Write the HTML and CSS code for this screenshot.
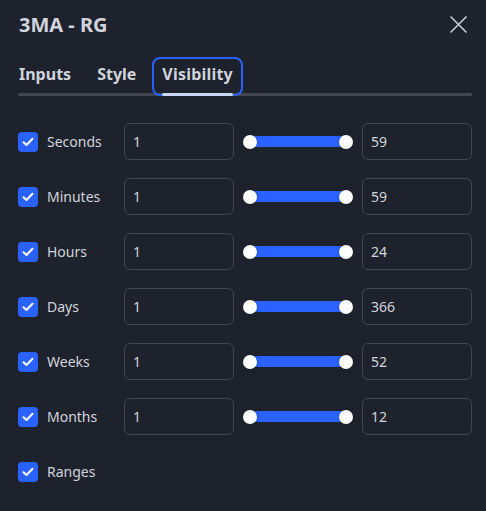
FILE: index.html
```html
<!DOCTYPE html>
<html>
<head>
<meta charset="utf-8">
<link rel="stylesheet" href="styles.css">
</head>
<body>
<div class="dialog">
  <div class="header">
    <div class="title">3MA - RG</div>
    <svg class="close" width="19" height="19" viewBox="0 0 19 19"><path d="M1.5 1.5L17.5 17.5M17.5 1.5L1.5 17.5" stroke="#d1d4dc" stroke-width="1.5" fill="none"/></svg>
  </div>
  <div class="tabs">
    <div class="tab">Inputs</div>
    <div class="tab">Style</div>
    <div class="tab active">Visibility</div>
  </div>
  <div class="rows">
    <div class="row">
      <span class="check"><svg width="12" height="10" viewBox="0 0 12 10"><path d="M1.5 5.2L4.5 8L10.5 1.8" stroke="#fff" stroke-width="2" fill="none" stroke-linecap="round" stroke-linejoin="round"/></svg></span>
      <span class="label">Seconds</span>
      <div class="field">1</div>
      <div class="slider"><span class="track"></span><span class="thumb"></span><span class="thumb"></span></div>
      <div class="field">59</div>
    </div>
    <div class="row">
      <span class="check"><svg width="12" height="10" viewBox="0 0 12 10"><path d="M1.5 5.2L4.5 8L10.5 1.8" stroke="#fff" stroke-width="2" fill="none" stroke-linecap="round" stroke-linejoin="round"/></svg></span>
      <span class="label">Minutes</span>
      <div class="field">1</div>
      <div class="slider"><span class="track"></span><span class="thumb"></span><span class="thumb"></span></div>
      <div class="field">59</div>
    </div>
    <div class="row">
      <span class="check"><svg width="12" height="10" viewBox="0 0 12 10"><path d="M1.5 5.2L4.5 8L10.5 1.8" stroke="#fff" stroke-width="2" fill="none" stroke-linecap="round" stroke-linejoin="round"/></svg></span>
      <span class="label">Hours</span>
      <div class="field">1</div>
      <div class="slider"><span class="track"></span><span class="thumb"></span><span class="thumb"></span></div>
      <div class="field">24</div>
    </div>
    <div class="row">
      <span class="check"><svg width="12" height="10" viewBox="0 0 12 10"><path d="M1.5 5.2L4.5 8L10.5 1.8" stroke="#fff" stroke-width="2" fill="none" stroke-linecap="round" stroke-linejoin="round"/></svg></span>
      <span class="label">Days</span>
      <div class="field">1</div>
      <div class="slider"><span class="track"></span><span class="thumb"></span><span class="thumb"></span></div>
      <div class="field">366</div>
    </div>
    <div class="row">
      <span class="check"><svg width="12" height="10" viewBox="0 0 12 10"><path d="M1.5 5.2L4.5 8L10.5 1.8" stroke="#fff" stroke-width="2" fill="none" stroke-linecap="round" stroke-linejoin="round"/></svg></span>
      <span class="label">Weeks</span>
      <div class="field">1</div>
      <div class="slider"><span class="track"></span><span class="thumb"></span><span class="thumb"></span></div>
      <div class="field">52</div>
    </div>
    <div class="row">
      <span class="check"><svg width="12" height="10" viewBox="0 0 12 10"><path d="M1.5 5.2L4.5 8L10.5 1.8" stroke="#fff" stroke-width="2" fill="none" stroke-linecap="round" stroke-linejoin="round"/></svg></span>
      <span class="label">Months</span>
      <div class="field">1</div>
      <div class="slider"><span class="track"></span><span class="thumb"></span><span class="thumb"></span></div>
      <div class="field">12</div>
    </div>
    <div class="row">
      <span class="check"><svg width="12" height="10" viewBox="0 0 12 10"><path d="M1.5 5.2L4.5 8L10.5 1.8" stroke="#fff" stroke-width="2" fill="none" stroke-linecap="round" stroke-linejoin="round"/></svg></span>
      <span class="label">Ranges</span>
    </div>
  </div>
</div>
</body>
</html>
```
FILE: styles.css
```css
html, body {
  margin: 0;
  padding: 0;
  background: #1e222d;
}
body {
  font-family: "Noto Sans", "Open Sans", sans-serif;
  color: #d1d4dc;
  width: 486px;
  height: 511px;
  overflow: hidden;
}
.dialog {
  display: flex;
  flex-direction: column;
}
.header {
  display: flex;
  align-items: center;
  justify-content: space-between;
  padding: 11px 19px 0 19px;
  height: 27px;
}
.title {
  font-size: 20px;
  font-weight: 700;
}
.close {
  display: block;
  margin-right: -1px;
}
.tabs {
  position: relative;
  display: flex;
  gap: 26px;
  margin: 22px 14px 0 18px;
  padding-left: 1px;
}
.tabs::after {
  content: "";
  position: absolute;
  left: 0;
  right: 0;
  bottom: 0;
  height: 3px;
  border-radius: 2px;
  background: #434651;
}
.tab {
  position: relative;
  font-size: 16px;
  font-weight: 700;
  line-height: 22px;
  padding: 3px 0 11px;
}
.tab.active {
  letter-spacing: 0.2px;
}
.tab.active::before {
  content: "";
  position: absolute;
  top: -3px;
  bottom: 0;
  left: -10px;
  right: -10px;
  border: 2px solid #2962ff;
  border-radius: 8px;
  z-index: 1;
}
.tab.active::after {
  content: "";
  position: absolute;
  left: 0;
  right: 0;
  bottom: 0;
  height: 3px;
  border-radius: 2px;
  background: #c9d6f5;
  z-index: 2;
}
.rows {
  display: flex;
  flex-direction: column;
  gap: 18px;
  padding: 27px 14px 0 18px;
}
.row {
  display: flex;
  align-items: center;
  height: 37px;
}
.check {
  width: 20px;
  height: 20px;
  border-radius: 4px;
  background: #2962ff;
  display: flex;
  align-items: center;
  justify-content: center;
  flex: none;
}
.label {
  margin-left: 9px;
  width: 77px;
  font-size: 14px;
}
.field {
  width: 110px;
  height: 37px;
  box-sizing: border-box;
  border: 1px solid #434651;
  border-radius: 6px;
  padding-left: 8px;
  font-size: 14px;
  display: flex;
  align-items: center;
}
.slider {
  position: relative;
  width: 110px;
  height: 37px;
  margin: 0 9px;
  display: flex;
  align-items: center;
  justify-content: space-between;
}
.track {
  position: absolute;
  left: 7px;
  right: 7px;
  top: 13px;
  height: 11px;
  background: #2962ff;
}
.thumb {
  position: relative;
  width: 14px;
  height: 14px;
  border-radius: 50%;
  background: #ffffff;
  box-shadow: 0 0 2px rgba(0,0,0,0.4);
}
```
